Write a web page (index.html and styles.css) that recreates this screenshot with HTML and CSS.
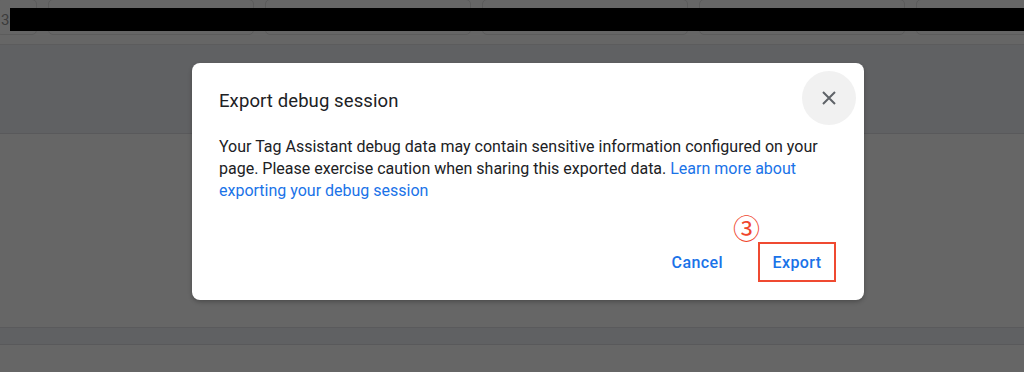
FILE: index.html
```html
<!DOCTYPE html>
<html lang="en">
<head>
  <meta charset="UTF-8">
  <title>Export debug session</title>
  <link rel="stylesheet" href="styles.css">
</head>
<body>
  <div class="page">
    <div class="toolbar">
      <span class="field field-num">3</span>
      <span class="field field-wide"></span>
      <span class="field field-wide"></span>
      <span class="field field-wide"></span>
      <span class="field field-wide"></span>
      <span class="field field-last"></span>
      <div class="redacted"></div>
    </div>
    <div class="band-top"></div>
    <div class="band-main"></div>
    <div class="band-foot"></div>
    <div class="band-bottom"></div>
  </div>

  <div class="dialog">
    <div class="dialog-head">
      <h2 class="dialog-title">Export debug session</h2>
      <button class="close-btn" aria-label="Close">
        <svg width="16" height="16" viewBox="0 0 16 16">
          <path d="M2 2 L14 14 M14 2 L2 14" stroke="#5f6368" stroke-width="2" fill="none"/>
        </svg>
      </button>
    </div>
    <p class="dialog-text">
      Your Tag Assistant debug data may contain sensitive information configured on your
      page. Please exercise caution when sharing this exported data.
      <a class="link" href="#">Learn more about exporting your debug session</a>
    </p>
    <div class="dialog-actions">
      <button class="text-btn">Cancel</button>
      <div class="marked">
        <span class="step">③</span>
        <button class="text-btn export-btn">Export</button>
      </div>
    </div>
  </div>
</body>
</html>
```

FILE: styles.css
```css
body {
  margin: 0;
  background-color: #666666;
  font-family: 'Roboto', 'Liberation Sans', sans-serif;
  overflow: hidden;
}
.page {
  height: 372px;
  display: flex;
  flex-direction: column;
}
.toolbar {
  position: relative;
  height: 44px;
  border-bottom: 1px solid #5c5c5d;
  display: flex;
  gap: 11px;
  margin-left: -4px;
}
.field {
  height: 36px;
  margin-top: -1px;
  border: 1px solid #5c5c5c;
  border-radius: 5px;
  box-sizing: border-box;
  color: #3c3c3c;
  font-size: 15px;
  line-height: 40px;
  padding-left: 4px;
}
.field-num { width: 41px; }
.field-wide { width: 206px; }
.field-last { flex: 1; margin-right: -8px; }
.redacted {
  position: absolute;
  left: 14px;
  right: 0;
  top: 8px;
  height: 23px;
  background-color: #000;
}
.band-top {
  height: 88px;
  background-color: #606163;
  border-bottom: 1px solid #59595b;
}
.band-main {
  height: 193px;
  background-color: #666666;
  border-bottom: 1px solid #5a5a5c;
}
.band-foot {
  height: 16px;
  background-color: #606163;
  border-bottom: 1px solid #59595b;
}
.band-bottom {
  flex: 1;
  background-color: #666666;
}

.dialog {
  position: absolute;
  left: 192px;
  top: 63px;
  width: 672px;
  height: 237px;
  box-sizing: border-box;
  background-color: #fff;
  border-radius: 8px;
  box-shadow: 0 2px 4px rgba(0, 0, 0, 0.25);
  padding: 0 8px 0 27px;
}
.dialog-head {
  display: flex;
  justify-content: space-between;
  align-items: flex-start;
}
.dialog-title {
  margin: 27px 0 0 0;
  font-size: 18.5px;
  font-weight: 400;
  color: #202124;
  letter-spacing: 0.1px;
}
.close-btn {
  width: 54px;
  height: 54px;
  margin-top: 8px;
  border: none;
  border-radius: 50%;
  background-color: #f1f1f1;
  display: flex;
  align-items: center;
  justify-content: center;
  padding: 0;
  cursor: pointer;
}
.dialog-text {
  margin: 11px 0 0 0;
  width: 615px;
  font-size: 16px;
  line-height: 22px;
  color: #202124;
}
.link {
  color: #1a73e8;
  text-decoration: none;
}
.dialog-actions {
  display: flex;
  justify-content: flex-end;
  align-items: flex-end;
  gap: 25px;
  margin-top: 13px;
  padding-right: 20px;
}
.text-btn {
  background: none;
  border: none;
  font-family: 'Roboto', 'Liberation Sans', sans-serif;
  font-size: 16px;
  font-weight: 500;
  letter-spacing: 0.4px;
  color: #1a73e8;
  padding: 10px 10px;
  cursor: pointer;
}
.marked {
  display: flex;
  flex-direction: column;
  align-items: flex-start;
}
.step {
  margin-left: -25px;
  margin-bottom: 1px;
  font-family: 'Noto Sans CJK JP', sans-serif;
  font-size: 27px;
  line-height: 26px;
  color: #f0452c;
}
.export-btn {
  border: 2px solid #ef4a31;
  padding: 9px 0;
  width: 78px;
  height: 40px;
}
```
